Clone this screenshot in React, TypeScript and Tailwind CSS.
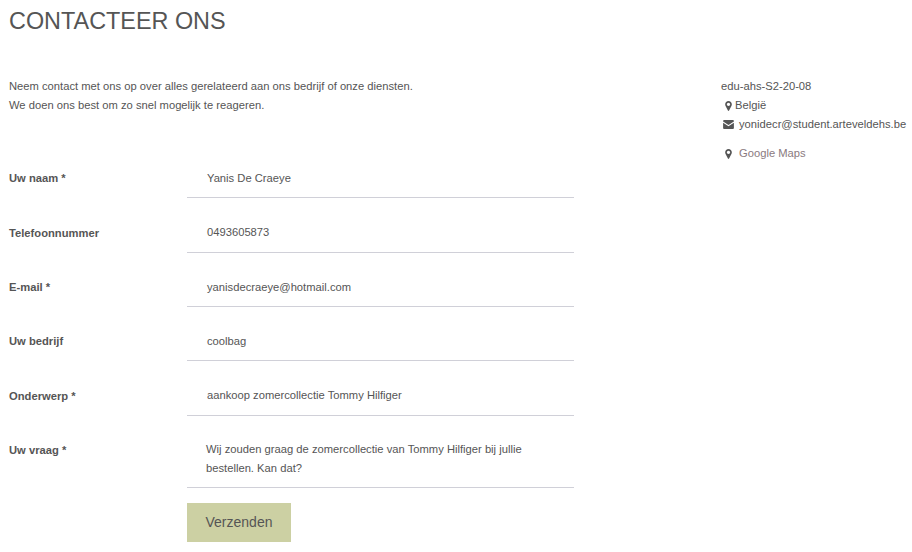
import React from 'react';

const fields = [
    { label: 'Uw naam *', value: 'Yanis De Craeye' },
    { label: 'Telefoonnummer', value: '0493605873' },
    { label: 'E-mail *', value: 'yanisdecraeye@hotmail.com' },
    { label: 'Uw bedrijf', value: 'coolbag' },
    { label: 'Onderwerp *', value: 'aankoop zomercollectie Tommy Hilfiger' },
];

const Pin: React.FC<{ className?: string }> = ({ className }) => (
    <svg viewBox="0 0 8 12" className={className} fill="#555">
        <path fillRule="evenodd" d="M4 0C1.8 0 0 1.8 0 4c0 .9.2 1.5.5 2.1L3.3 11.500c.3.6 1.1.6 1.4 0L7.500 6.100C7.800 5.500 8 4.900 8 4 8 1.800 6.200 0 4 0zm0 6C2.900 6 2 5.100 2 4s.9-2 2-2 2 .9 2 2-.9 2-2 2z" />
    </svg>
);

const Mail: React.FC<{ className?: string }> = ({ className }) => (
    <svg viewBox="0 0 12 10" className={className} fill="#555">
        <path d="M1 0h10c.6 0 1 .4 1 1v.6L6 5.500 0 1.600V1c0-.6.4-1 1-1z" />
        <path d="M0 3v6c0 .6.4 1 1 1h10c.6 0 1-.4 1-1V3L6 7z" />
    </svg>
);

export default function App() {
    return (
        <div className="h-[552px] w-[912px] overflow-hidden bg-white text-[#555] font-['Liberation_Sans',Arial,sans-serif] text-[11.2px] tracking-[0.01px]">
            <h1 className="pl-[9px] pt-[8px] text-[23.4px] leading-[27px] font-normal tracking-normal">CONTACTEER ONS</h1>
            <div className="flex pl-[9px] mt-[42px]">
                <div className="w-[712px]">
                    <p className="leading-[19px]">Neem contact met ons op over alles gerelateerd aan ons bedrijf of onze diensten.</p>
                    <p className="leading-[19px]">We doen ons best om zo snel mogelijk te reageren.</p>
                    <form className="mt-[28.8px]">
                        {fields.map((field) => (
                            <div key={field.label} className="flex h-[54.4px]">
                                <label className="w-[178px] pt-[25.4px] leading-[19px] font-bold">{field.label}</label>
                                <div className="w-[387px] h-[54.4px] border-b border-[#d0d0d8] pl-[20px] pt-[25px] leading-[19px]">{field.value}</div>
                            </div>
                        ))}
                        <div className="flex">
                            <label className="w-[178px] pt-[25px] leading-[19px] font-bold">Uw vraag *</label>
                            <div className="w-[387px] h-[72px] border-b border-[#d0d0d8] pl-[19px] pr-[40px] pt-[24px] leading-[19px]">
                                Wij zouden graag de zomercollectie van Tommy Hilfiger bij jullie bestellen. Kan dat?
                            </div>
                        </div>
                        <div className="pl-[178px] pt-[15px]">
                            <button type="button" className="h-[39px] w-[104px] bg-[#ccd0a3] text-[14px] text-[#555] tracking-normal">Verzenden</button>
                        </div>
                    </form>
                </div>
                <aside className="leading-[19px] whitespace-nowrap">
                    <div>edu-ahs-S2-20-08</div>
                    <div className="flex items-center pl-[4px]">
                        <Pin className="w-[7px] h-[10px] mr-[3px]" />
                        <span>België</span>
                    </div>
                    <div className="flex items-center pl-[2px]">
                        <Mail className="w-[11px] h-[9px] mr-[5px]" />
                        <span>yonidecr@student.arteveldehs.be</span>
                    </div>
                    <div className="flex items-center pl-[4px] mt-[10px]">
                        <Pin className="w-[7px] h-[10px] mr-[7px]" />
                        <span className="text-[#8a7a80]">Google Maps</span>
                    </div>
                </aside>
            </div>
        </div>
    );
}
